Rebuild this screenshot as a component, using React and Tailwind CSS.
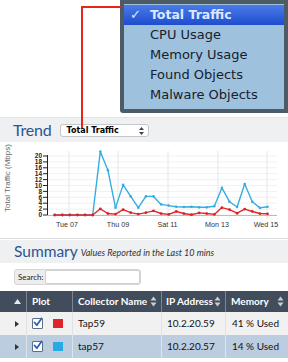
import React from "react";

const blue = [0,0,0,0,0,0,21.5,15.2,2.5,10.2,6.3,2.5,6.3,6.3,3.6,3.2,2.8,2.7,2.8,2.6,2.6,3.0,9.2,4.5,2.7,10.5,4.5,2.4,2.8];
const red = [0,0,0,0,0,0,2.1,0.5,0.3,1.8,0.8,0.3,0.8,1.4,0.5,0.2,1.2,0.5,0.1,0.7,0.5,0.2,2.5,1.8,0.6,2.0,1.2,0.5,0.4];
const X = (i) => 54.7 + 7.6 * i;
const Y = (v) => 73 - 2.95 * v;

function Chart() {
  const ticks = [0,2,4,6,8,10,12,14,16,18,20];
  const vgrid = [69, 118, 168, 218, 267];
  const xlabels = [["Tue 07", 67], ["Thu 09", 118], ["Sat 11", 167.5], ["Mon 13", 217], ["Wed 15", 266]];
  const pts = (arr) => arr.map((v, i) => `${X(i).toFixed(1)},${Y(v).toFixed(1)}`).join(" ");
  return (
    <svg width="288" height="96" viewBox="0 0 288 96" className="block">
      {ticks.map((t) => (
        <line key={"h" + t} x1="47" x2="277" y1={Y(t)} y2={Y(t)} stroke="#f1f1f1" strokeWidth="1" />
      ))}
      {vgrid.map((x) => (
        <line key={"v" + x} x1={x} x2={x} y1="9" y2="77" stroke="#e6e6e6" strokeWidth="1" />
      ))}
      <line x1="47.5" x2="47.5" y1="13" y2="73" stroke="#222" strokeWidth="1" />
      <line x1="47" x2="277" y1="73.5" y2="73.5" stroke="#bbb" strokeWidth="1" />
      {ticks.map((t) => (
        <g key={"t" + t}>
          <line x1="43" x2="47" y1={Y(t)} y2={Y(t)} stroke="#222" strokeWidth="1" />
          <text x="42" y={Y(t) + 2.2} textAnchor="end" fontSize="6.5" fontWeight="700" fill="#222" fontFamily="'Liberation Sans', sans-serif">{t}</text>
        </g>
      ))}
      {xlabels.map(([l, x]) => (
        <text key={l} x={x} y="85" textAnchor="middle" fontSize="7.2" fill="#333" fontFamily="'Liberation Sans', sans-serif">{l}</text>
      ))}
      <text transform="translate(9.5 36) rotate(-90)" textAnchor="middle" fontSize="8" fill="#666" fontFamily="'Liberation Sans', sans-serif">Total Traffic (Mbps)</text>
      <polyline points={pts(blue)} fill="none" stroke="#33aee2" strokeWidth="1.4" strokeLinejoin="round" />
      {blue.map((v, i) => (
        <circle key={"b" + i} cx={X(i)} cy={Y(v)} r="1.3" fill="#33aee2" />
      ))}
      <polyline points={pts(red)} fill="none" stroke="#e0282c" strokeWidth="1.4" strokeLinejoin="round" />
      {red.map((v, i) => (
        <circle key={"r" + i} cx={X(i)} cy={Y(v)} r="1.4" fill="#d82428" />
      ))}
    </svg>
  );
}

function SortIcon() {
  return (
    <svg width="7" height="11" viewBox="0 0 7 11" className="shrink-0">
      <path d="M3.5 0.5 L6.5 4.5 H0.5 Z" fill="#c9ced6" />
      <path d="M3.5 10.5 L6.5 6.5 H0.5 Z" fill="#c9ced6" />
    </svg>
  );
}

function Checkbox() {
  return (
    <div className="w-[11px] h-[11px] border border-[#5c6f88] bg-white rounded-[1px] relative">
      <svg width="11" height="11" viewBox="0 0 11 11" className="absolute -left-[1px] -top-[2px]">
        <path d="M2.5 5.5 L4.8 8.2 L9.5 1.5" fill="none" stroke="#2c63b8" strokeWidth="1.8" strokeLinecap="round" strokeLinejoin="round" />
      </svg>
    </div>
  );
}

function Row({ bg, color, name, ip, mem }) {
  return (
    <div className={`flex h-[23px] items-center text-[10px] text-[#111] ${bg}`}>
      <div className="w-[27px] h-full flex items-center justify-center pl-[8px] border-r border-[#dfe3e8]">
        <svg width="4" height="6" viewBox="0 0 4 6"><path d="M0 0 L4 3 L0 6 Z" fill="#333" /></svg>
      </div>
      <div className="w-[46px] h-full flex items-center gap-[10px] pl-[5px] border-r border-[#dfe3e8]">
        <Checkbox />
        <div className={`w-[10px] h-[9px] ${color}`} />
      </div>
      <div className="w-[89px] h-full flex items-center pl-[5px] border-r border-[#dfe3e8]">{name}</div>
      <div className="w-[64px] h-full flex items-center pl-[5px] border-r border-[#dfe3e8]">{ip}</div>
      <div className="w-[62px] h-full flex items-center justify-end pr-[9px]">{mem}</div>
    </div>
  );
}

export default function App() {
  return (
    <div className="w-[288px] h-[362px] relative overflow-hidden bg-white" style={{ fontFamily: "Lato, 'Open Sans', sans-serif" }}>
      {/* Top area with popup menu */}
      <div className="h-[117px] flex justify-end">
        <div className="w-[168px] h-[113px] border-4 border-[#4d5b67] bg-[#9ec2de] pt-[1px] rounded-bl-[3px]" style={{ fontFamily: "'DejaVu Sans', sans-serif" }}>
          <div className="h-[20px] flex items-center bg-gradient-to-b from-[#4b7ae9] to-[#1f4ccd] text-[#dde8ff] font-bold text-[12.5px]">
            <span className="w-[26px] pl-[6px] text-[13px]">✓</span>
            <span>Total Traffic</span>
          </div>
          {["CPU Usage", "Memory Usage", "Found Objects", "Malware Objects"].map((t) => (
            <div key={t} className="h-[20px] flex items-center pl-[26px] text-[13px] text-[#16202c]">{t}</div>
          ))}
        </div>
      </div>

      {/* Trend header */}
      <div className="h-[25px] bg-[#eef0f2] border-t border-[#e2e4e6] flex items-center pl-[13px] gap-[8px]">
        <span className="text-[16px] leading-none text-[#2b5594] tracking-[-0.2px]">Trend</span>
        <div className="w-[89px] h-[13px] bg-white border border-[#c4c7cb] rounded-[3px] flex items-center justify-between pl-[6px] pr-[4px] mt-[1px]">
          <span className="text-[8px] font-bold text-black leading-none" style={{ fontFamily: "'DejaVu Sans', sans-serif", fontWeight: 600 }}>Total Traffic</span>
          <svg width="5" height="8" viewBox="0 0 5 8"><path d="M2.5 0 L5 3 H0 Z M2.5 8 L5 5 H0 Z" fill="#444" /></svg>
        </div>
      </div>

      {/* Chart */}
      <div className="h-[97px] border-b border-[#dcdcdc]">
        <Chart />
      </div>

      {/* Summary header */}
      <div className="h-[23px] mt-[1px] bg-[#eef0f2] flex items-center pl-[14px] gap-[3px]">
        <span className="text-[15.5px] leading-none text-[#2b5594]">Summary</span>
        <span className="text-[9px] italic text-[#333] mt-[3px]">Values Reported in the Last 10 mins</span>
      </div>

      {/* Search */}
      <div className="h-[28px] pl-[14px] pt-[6px]">
        <div className="w-[127px] h-[16px] bg-[#ededed] border border-[#d6d6d6] rounded-[3px] flex items-center pl-[3px] gap-[1px]">
          <span className="text-[8px] text-[#222]">Search:</span>
          <div className="flex-1 h-[14px] bg-white border border-[#d0d0d0] rounded-[2px]" />
        </div>
      </div>

      {/* Table header */}
      <div className="flex h-[21px] bg-[#414c5c] text-white text-[10px] font-bold items-center">
        <div className="w-[27px] h-full flex items-center justify-center pl-[9px] border-r border-[#7b8595]">
          <svg width="7" height="5" viewBox="0 0 7 5"><path d="M3.5 0 L7 5 H0 Z" fill="#e6e9ee" /></svg>
        </div>
        <div className="w-[46px] h-full flex items-center pl-[5px] border-r border-[#7b8595]">Plot</div>
        <div className="w-[89px] h-full flex items-center justify-between pl-[5px] pr-[4px] border-r border-[#7b8595]">
          <span>Collector Name</span><SortIcon />
        </div>
        <div className="w-[64px] h-full flex items-center justify-between pl-[4px] pr-[4px] border-r border-[#7b8595]">
          <span>IP Address</span><SortIcon />
        </div>
        <div className="w-[62px] h-full flex items-center justify-between pl-[5px] pr-[4px]">
          <span>Memory</span><SortIcon />
        </div>
      </div>
      <Row bg="bg-[#f1f1f1]" color="bg-[#e0242b]" name="Tap59" ip="10.2.20.59" mem="41 % Used" />
      <Row bg="bg-[#bccde0]" color="bg-[#25aae2]" name="tap57" ip="10.2.20.57" mem="14 % Used" />

      {/* Red connector line */}
      <svg width="130" height="130" viewBox="0 0 130 130" className="absolute left-0 top-0 pointer-events-none">
        <path d="M82 128 V7 H121" fill="none" stroke="#e8241c" strokeWidth="2" />
      </svg>
    </div>
  );
}
